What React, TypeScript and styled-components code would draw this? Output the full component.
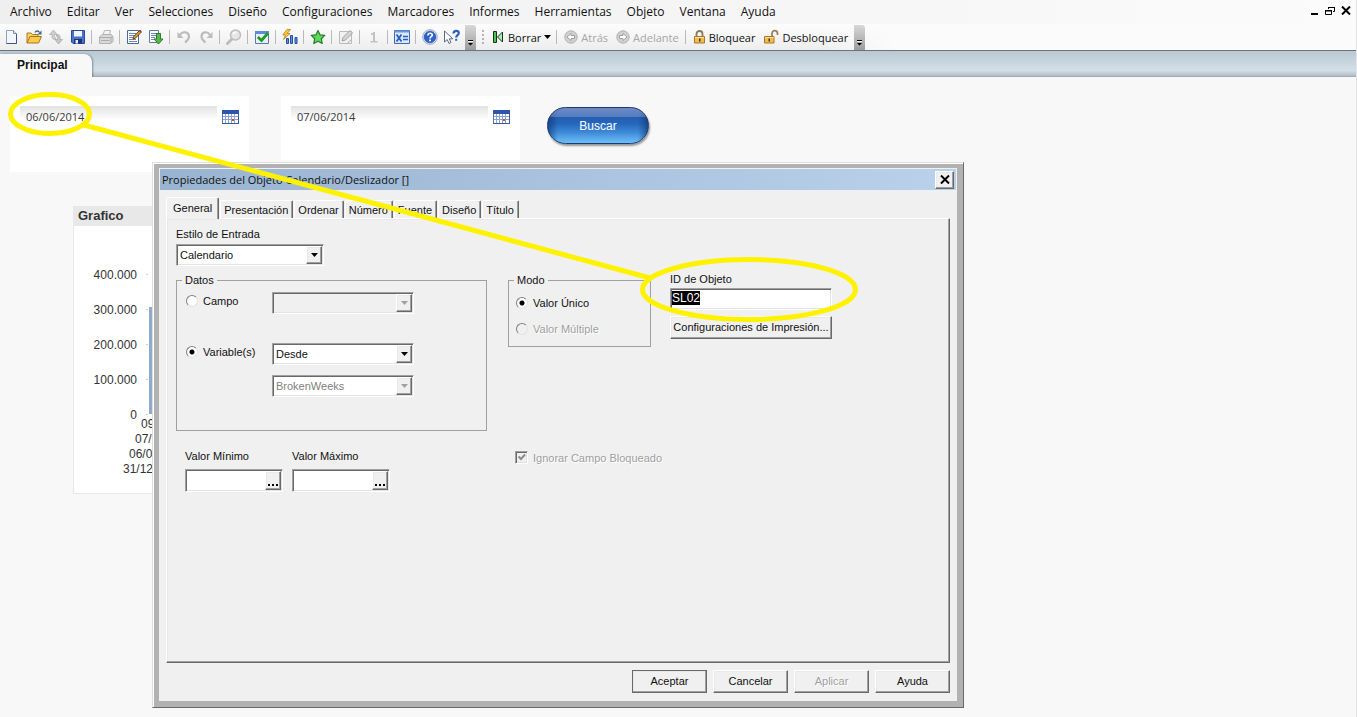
import React, { useEffect, useRef } from "react";
import styled, { createGlobalStyle, css } from "styled-components";

const uiFont = `"Open Sans", "Noto Sans", sans-serif`;
const dialogFont = `"Liberation Sans", Arial, sans-serif`;

const GlobalStyle = createGlobalStyle`
  *, *::before, *::after { box-sizing: border-box; }
  body { margin: 0; background: #f8f8f8; font-family: ${dialogFont}; font-size: 11px; color: #111; }
  button, input, select { font: inherit; color: inherit; margin: 0; }
`;

/* ---------- Classic bevels ---------- */

const sunken = css`
  border: 1px solid;
  border-color: #a0a0a0 #fff #fff #a0a0a0;
  box-shadow: inset 1px 1px 0 #696969, inset -1px -1px 0 #e3e3e3;
`;

const raised = css`
  border: 1px solid;
  border-color: #fff #696969 #696969 #fff;
  box-shadow: inset -1px -1px 0 #a0a0a0, inset 1px 1px 0 #e9e9e9;
`;

/* ---------- Application frame ---------- */

const AppFrame = styled.div`
  display: flex;
  flex-direction: column;
  min-height: 100vh;
  position: relative;
  overflow: hidden;
  border-right: 1px solid #e4e4e4;
`;

const MenuBar = styled.nav`
  display: flex;
  align-items: center;
  height: 24px;
  padding: 0 5px 0 10px;
  background: linear-gradient(90deg, #efefef, #fbfbfb);
  font-family: ${uiFont};
  font-size: 12px;
`;

const MenuList = styled.div`
  display: flex;
  flex: 1;
  gap: 15px;
`;

const MenuItem = styled.button`
  padding: 0;
  border: 0;
  background: none;
  line-height: 16px;
`;

const WindowControls = styled.div`
  display: flex;
  gap: 6px;
  padding-bottom: 3px;
`;

const WindowControl = styled.button`
  display: flex;
  padding: 0;
  border: 0;
  background: none;
`;

const ToolBar = styled.div`
  display: flex;
  align-items: stretch;
  height: 27px;
  padding-left: 1px;
  background: linear-gradient(90deg, rgba(251, 251, 251, 0) 60%, #fbfbfb 66%), linear-gradient(#fdfdfd, #ededed);
  border-bottom: 1px solid #6d7479;
  font-family: ${uiFont};
  font-size: 11px;
`;

const ToolButton = styled.button`
  display: flex;
  align-items: center;
  justify-content: center;
  width: 22px;
  padding: 0;
  border: 0;
  background: none;
`;

const TextToolButton = styled.button<{ $compact?: boolean }>`
  display: flex;
  align-items: center;
  gap: 3px;
  padding: 0 ${(p) => (p.$compact ? 3 : 4)}px;
  border: 0;
  background: none;
  &:disabled { color: #a7a7a7; }
`;

const Separator = styled.span`
  width: 1px;
  height: 14px;
  margin: 0 3px 0 2px;
  align-self: center;
  background: #b9b9b9;
`;

const Overflow = styled.button`
  display: flex;
  align-items: flex-end;
  justify-content: center;
  width: 11px;
  margin: 1px 2px 0;
  padding: 0 0 4px;
  border: 0;
  border-radius: 0 3px 0 0;
  background: linear-gradient(#d8d8d8, #9c9c9c);
`;

const Grip = styled.span`
  width: 2px;
  height: 14px;
  margin: 0 5px 0 4px;
  align-self: center;
  background: repeating-linear-gradient(#b4b4b4 0 2px, transparent 2px 4px);
`;

const TabStrip = styled.div`
  display: flex;
  align-items: flex-end;
  height: 26px;
  background: linear-gradient(#b9c8d2, #d3dfe8 75%, #b5bfc7 94%, #9da3a8);
`;

const SheetTab = styled.button`
  height: 23px;
  padding: 0 24px 1px 17px;
  border: 0;
  border-radius: 0 8px 0 0;
  background: #f8f8f8;
  box-shadow: 1px 0 2px rgba(0, 0, 0, 0.35);
  font-size: 12px;
  font-weight: 700;
`;

const Sheet = styled.main`
  position: relative;
  flex: 1;
  padding: 19px 10px;
  background: #f8f8f8;
`;

const FilterRow = styled.div`
  display: flex;
  align-items: flex-start;
  gap: 27px;
`;

const DateGroup = styled.div`
  display: flex;
  align-items: flex-start;
  gap: 32px;
`;

const DateBox = styled.div<{ $height: number }>`
  display: flex;
  align-items: flex-start;
  gap: 5px;
  width: 239px;
  height: ${(p) => p.$height}px;
  padding: 10px;
  background: #fff;
`;

const DateInput = styled.input`
  flex: 1;
  min-width: 0;
  height: 20px;
  padding: 0 6px;
  border: 0;
  background: linear-gradient(#e2e2e2, #fff 14px);
  font-family: ${uiFont};
  font-size: 11px;
  color: #3a3a3a;
`;

const CalendarButton = styled.button`
  display: flex;
  padding: 4px 0 0;
  border: 0;
  background: none;
`;

const SearchButton = styled.button`
  width: 102px;
  height: 37px;
  margin-top: 11px;
  border: 1px solid #1c3a70;
  border-radius: 19px;
  background:
    linear-gradient(rgba(255, 255, 255, 0.32), rgba(255, 255, 255, 0.2)) top / 100% 9px no-repeat,
    linear-gradient(90deg, rgba(12, 50, 110, 0.6), transparent 10%, transparent 90%, rgba(12, 50, 110, 0.6)),
    linear-gradient(#2a52a8, #2566bb 45%, #3f8ad8 70%, #6cc0f8);
  box-shadow: 1px 2px 2px rgba(0, 0, 0, 0.4);
  color: #fff;
  font-size: 12px;
`;

const ChartPanel = styled.section`
  width: 480px;
  margin: 34px 0 0 63px;
  border: 1px solid #e8e8e8;
  background: #fff;
`;

const ChartTitle = styled.h2`
  margin: 0;
  height: 19px;
  padding: 0 4px;
  background: #e8e8e8;
  font-size: 13px;
  line-height: 18px;
  color: #333;
`;

const ChartSvg = styled.svg`
  display: block;
  width: 100%;
  height: 267px;
  font-size: 12px;
  fill: #333;
`;

/* ---------- Dialog ---------- */

const Dialog = styled.section`
  position: absolute;
  top: 85px;
  left: 152px;
  width: 812px;
  border: 1px solid;
  border-color: #dedede #696969 #696969 #dedede;
  background: #b2b2b2;
  box-shadow: inset 1px 1px 0 #fff;
  padding: 5px 6px 6px;
`;

const DialogBody = styled.div`
  border: 1px solid #f0f0f0;
  background: #f0f0f0;
`;

const TitleBar = styled.header`
  display: flex;
  align-items: center;
  justify-content: space-between;
  height: 21px;
  padding: 0 2px;
  background: linear-gradient(90deg, #99b4d1, #b9d1ea);
  font-family: ${uiFont};
`;

const DialogTitle = styled.h1`
  margin: 0;
  font-size: 11px;
  font-weight: 400;
`;

const CloseButton = styled.button`
  display: flex;
  align-items: center;
  justify-content: center;
  width: 19px;
  height: 18px;
  padding: 0;
  background: #f0f0f0;
  ${raised}
`;

const Tabs = styled.div`
  display: flex;
  align-items: flex-end;
  padding: 7px 0 0 6px;
`;

const Tab = styled.button<{ $active?: boolean }>`
  height: ${(p) => (p.$active ? 22 : 18)}px;
  margin-bottom: ${(p) => (p.$active ? -1 : 0)}px;
  margin-right: 1px;
  padding: ${(p) => (p.$active ? "0 6px 2px" : "0 4px 0 3px")};
  border: solid;
  border-width: 1px 1px 0 1px;
  border-color: #fff #696969 #fff #fff;
  border-radius: 2px 2px 0 0;
  background: #f0f0f0;
  box-shadow: inset -1px 0 0 #a0a0a0;
  position: relative;
  z-index: ${(p) => (p.$active ? 1 : 0)};
`;

const TabPanel = styled.div`
  height: 445px;
  margin: 0 6px;
  padding: 8px 9px;
  ${raised}
`;

const FieldLabel = styled.label`
  display: block;
  height: 17px;
  line-height: 14px;
`;

const SelectFrame = styled.span<{ $width: number; $grey?: boolean }>`
  display: flex;
  width: ${(p) => p.$width}px;
  height: 22px;
  padding: 1px;
  background: ${(p) => (p.$grey ? "#f0f0f0" : "#fff")};
  ${sunken}
`;

const NativeSelect = styled.select`
  flex: 1;
  min-width: 0;
  padding: 0 2px;
  border: 0;
  appearance: none;
  background: none;
  &:disabled { color: #808080; opacity: 1; }
`;

const ArrowBox = styled.span`
  display: flex;
  align-items: center;
  justify-content: center;
  width: 16px;
  background: #f0f0f0;
  ${raised}
`;

const GroupRow = styled.div`
  display: flex;
  align-items: flex-start;
  margin-top: 7px;
`;

const Group = styled.fieldset<{ $width: number; $height: number }>`
  width: ${(p) => p.$width}px;
  height: ${(p) => p.$height}px;
  min-width: 0;
  margin: 0;
  padding: 5px 9px 0;
  border: 1px solid #a0a0a0;
`;

const Legend = styled.legend`
  margin-left: -4px;
  padding: 0 3px;
  line-height: 14px;
`;

const DataGrid = styled.div`
  display: grid;
  grid-template-columns: 86px 142px;
  grid-template-rows: 41px 22px 22px;
  row-gap: 10px;
`;

const Choice = styled.label<{ $disabled?: boolean }>`
  display: flex;
  align-items: center;
  align-self: start;
  gap: 5px;
  height: 17px;
  color: ${(p) => (p.$disabled ? "#a0a0a0" : "#111")};
  text-shadow: ${(p) => (p.$disabled ? "1px 1px 0 #fff" : "none")};
`;

const ModeList = styled.div`
  display: grid;
  gap: 9px;
  margin-left: -2px;
  padding-top: 2px;
`;

const Radio = styled.input`
  appearance: none;
  width: 12px;
  height: 12px;
  border: 1px solid;
  border-color: #808080 #e3e3e3 #e3e3e3 #808080;
  border-radius: 50%;
  background: ${(p) => (p.disabled ? "#f0f0f0" : "#fff")};
  &:checked { background: radial-gradient(circle, #000 0 2px, #fff 3px); }
`;

const CheckFrame = styled.span`
  display: grid;
  width: 13px;
  height: 13px;
  background: #f0f0f0;
  ${sunken}
  & > * { grid-area: 1 / 1; }
`;

const CheckInput = styled.input`
  appearance: none;
  width: 11px;
  height: 11px;
`;

const ModeCell = styled.div`
  margin-left: 21px;
`;

const ObjectColumn = styled.div`
  display: flex;
  flex-direction: column;
  width: 162px;
  margin-left: 19px;
`;

const IdLabel = styled.label`
  padding-bottom: 2px;
  line-height: 13px;
`;

const IdInput = styled.input`
  height: 22px;
  padding: 0 1px 2px;
  background: #fff;
  font-size: 12px;
  outline: none;
  ${sunken}
  &::selection { background: #000; color: #fff; }
`;

const PushButton = styled.button<{ $default?: boolean }>`
  min-width: 75px;
  height: 23px;
  padding: 0 0 2px;
  background: #f0f0f0;
  white-space: nowrap;
  ${raised}
  outline: ${(p) => (p.$default ? "1px solid #696969" : "none")};
  outline-offset: -1px;
  &:disabled { color: #a0a0a0; text-shadow: 1px 1px 0 #fff; }
`;

const PrintButton = styled(PushButton)`
  margin-top: 6px;
`;

const LimitRow = styled.div`
  display: flex;
  margin-top: 18px;
  padding-left: 9px;
`;

const LimitFields = styled.div`
  display: flex;
  gap: 9px;
  width: 330px;
`;

const LimitLabel = styled.label`
  display: block;
  height: 20px;
  line-height: 14px;
`;

const LimitFrame = styled.span`
  display: flex;
  width: 98px;
  height: 23px;
  padding: 1px;
  background: #fff;
  ${sunken}
`;

const LimitInput = styled.input`
  flex: 1;
  min-width: 0;
  padding: 0 2px;
  border: 0;
  background: none;
`;

const MoreButton = styled.button`
  display: flex;
  align-items: flex-end;
  justify-content: center;
  width: 16px;
  padding: 0 0 3px;
  background: #f0f0f0;
  ${raised}
`;

const Footer = styled.footer`
  display: flex;
  justify-content: flex-end;
  gap: 6px;
  padding: 7px 6px;
`;

const Markup = styled.svg`
  position: absolute;
  top: 0;
  left: 0;
  pointer-events: none;
`;

/* ---------- Icons ---------- */

const Icon = ({ children }: { children: React.ReactNode }) => (
  <svg width="16" height="16" viewBox="0 0 16 16" aria-hidden="true">{children}</svg>
);

const NewIcon = () => (
  <Icon>
    <path d="M2.500 1.500h7l3 3v10h-10z" fill="#f3f7fd" stroke="#8fa1c2" />
    <path d="M9.500 1.500v3h3" fill="#cfdcf0" stroke="#7d90b3" />
    <path d="M12.500 5v9.500h-10" fill="none" stroke="#3d557f" />
  </Icon>
);

const OpenIcon = () => (
  <Icon>
    <path d="M1 14V4h4l1.500 1.500H12V8" fill="#f6d26b" stroke="#a97d1f" />
    <path d="M1 14L4 7.500h11.500L12.500 14z" fill="#ffc94a" stroke="#a9741a" />
    <path d="M9 3.500c1-2 3.500-2 4.500 0" fill="none" stroke="#3c6794" strokeWidth="1.300" />
    <path d="M15.500 1.500v4h-4z" fill="#3c6794" />
  </Icon>
);

const ReloadIcon = () => (
  <Icon>
    <path d="M5.500 1L1.500 5.500H4V8c0 1.500 1 2.500 3.500 2.500V8.800C6.500 8.800 6.500 8 6.500 7.500v-2H9z" fill="#cdcdcd" stroke="#b2b2b2" strokeWidth=".8" />
    <path d="M10.500 15l4-4.500H12V8c0-1.500-1-2.500-3.500-2.500v1.700c1 0 1 .8 1 1.300v2H7z" fill="#c6c6c6" stroke="#ababab" strokeWidth=".8" />
  </Icon>
);

const SaveIcon = () => (
  <Icon>
    <path d="M1.500 1.500h13v13H3l-1.500-1.500z" fill="#4a72cc" stroke="#2b479c" />
    <path d="M4 2h8v5.500H4z" fill="#eef3fc" />
    <path d="M4 10h8v4.500H4z" fill="#1e3476" />
    <path d="M5.500 11h2.500v3.500H5.500z" fill="#e6ecf7" />
  </Icon>
);

const PrintIcon = () => (
  <Icon>
    <path d="M5 6l1.500-4.500h6L11.500 6" fill="#f4f4f4" stroke="#b8b8b8" />
    <path d="M1.500 8l2.500-2.500h9.500L15 8v4.500l-2 2H1.500z" fill="#d9d9d9" stroke="#b2b2b2" />
    <path d="M1.500 8.500H13l2-1M3 11.500h8.500M13 8.500v5.500" fill="none" stroke="#acacac" />
  </Icon>
);

const EditScriptIcon = () => (
  <Icon>
    <path d="M1.500 1.500h11v13h-11z" fill="#fff" stroke="#4e6796" />
    <path d="M3 4.500h7M3 6.500h6M3 8.500h4M3 10.500h7M3 12.500h8" stroke="#6d87b4" />
    <path d="M7 10l.7-2.500L13.500 1.500l1.800 1.600L9.500 9.200z" fill="#d99a3c" stroke="#5e3f16" strokeWidth=".9" />
    <path d="M13 2l1.200-1.300 1.600 1.500-1.200 1.300z" fill="#a5302a" />
  </Icon>
);

const RunScriptIcon = () => (
  <Icon>
    <path d="M1.500 1.500h9v12h-9z" fill="#fff" stroke="#6079a6" />
    <path d="M3 4.500h6M3 6.500h5M3 8.500h4M3 10.500h4" stroke="#6d87b4" />
    <path d="M8.500 4.500h4V10H15l-4.500 5L6 10h2.500z" fill="#56b64b" stroke="#2d7d2c" />
  </Icon>
);

const UndoIcon = () => (
  <Icon>
    <path d="M4 6c3-4.500 9-3 9 1.500 0 3-2 4.500-4 6" fill="none" stroke="#bcbcbc" strokeWidth="2.200" />
    <path d="M1.500 3v6h6z" fill="#bcbcbc" />
  </Icon>
);

const RedoIcon = () => (
  <Icon>
    <path d="M12 6C9 1.500 3.500 3 3.500 7.500c0 3 2 4.500 4 6" fill="none" stroke="#bcbcbc" strokeWidth="2.200" />
    <path d="M14.500 3v6h-6z" fill="#bcbcbc" />
  </Icon>
);

const SearchIcon = () => (
  <Icon>
    <path d="M6 10l-4.500 4.500" stroke="#bcbcbc" strokeWidth="3" strokeLinecap="round" />
    <circle cx="9.500" cy="6" r="5" fill="#e6e6e6" stroke="#bdbdbd" strokeWidth="1.500" />
    <path d="M6.800 5.500c.5-1.500 2-2.200 3.500-2" fill="none" stroke="#fff" strokeWidth="1.300" />
  </Icon>
);

const CheckIcon = () => (
  <Icon>
    <path d="M1.500 2.500h13v12h-13z" fill="#e9f0fb" stroke="#5578b6" />
    <path d="M1 2h14v3H1z" fill="#5f8bd8" />
    <path d="M3.800 8l3.700 3.500L14 4" fill="none" stroke="#1f9b1f" strokeWidth="2.800" />
  </Icon>
);

const ChartIcon = () => (
  <Icon>
    <path d="M4.500 9.500h2v5h-2zM8.500 6.500h2v8h-2zM13 8.500h2v6h-2z" fill="#5b92e6" stroke="#274f9c" />
    <path d="M5 .5L.8 6h2.700L1.500 10.500 8 4.500H5L8.500.5z" fill="#ffcb3c" stroke="#b97d16" strokeWidth=".8" />
  </Icon>
);

const StarIcon = () => (
  <Icon>
    <path d="M8 1.500l2 4.300 4.800.6-3.500 3.300.9 4.800L8 12.200l-4.200 2.300.9-4.800L1.200 6.400 6 5.800z" fill="#5fd75a" stroke="#247d2c" strokeWidth="1.200" strokeLinejoin="round" />
  </Icon>
);

const NoteIcon = () => (
  <Icon>
    <path d="M1.500 2.500h12v12h-12z" fill="#f1f1f1" stroke="#bababa" />
    <path d="M4 12l1-3.500 7-7 2.500 2.500-7 7z" fill="#d5d5d5" stroke="#a2a2a2" />
    <path d="M9 14.500l4.500-4" stroke="#b2b2b2" />
  </Icon>
);

const OneIcon = () => (
  <Icon>
    <path d="M5 4.500L8 3h1v9h2.500v1.500H4.500V12H7V5.500L5 6.200z" fill="#c2c2c2" />
  </Icon>
);

const ExpressionIcon = () => (
  <Icon>
    <path d="M.5 1.500h15v13H.5z" fill="#dbe8fb" stroke="#3d69b5" />
    <path d="M.5 1.500h15v2H.5z" fill="#6c97de" />
    <path d="M2.500 5.500l5 7M7.500 5.500l-5 7" stroke="#2b5cba" strokeWidth="1.800" />
    <path d="M9 7.500h5M9 10.500h5" stroke="#2b5cba" strokeWidth="1.600" />
  </Icon>
);

const HelpIcon = () => (
  <Icon>
    <circle cx="8" cy="8" r="7.300" fill="#dfe6f2" stroke="#9aa9c4" />
    <circle cx="8" cy="8" r="5.800" fill="#2f62c8" stroke="#1e459b" strokeWidth=".6" />
    <path d="M5.800 6.500C6 3.500 10.500 3.700 10.300 6.300 10.200 7.700 8 7.800 8 9.500" fill="none" stroke="#fff" strokeWidth="1.600" />
    <path d="M7.100 10.600h1.800v1.700H7.100z" fill="#fff" />
  </Icon>
);

const ContextHelpIcon = () => (
  <Icon>
    <path d="M.5 2v11l2.700-2.500L5 14.500l2-1-1.700-3.700h3.500z" fill="#fff" stroke="#5c6a86" />
    <path d="M9.500 4.500C9.700.8 15 1 14.800 4.300c-.1 1.900-2.600 2-2.600 4.200" fill="none" stroke="#2f5fb8" strokeWidth="2.200" />
    <path d="M11.200 9.800h2v2h-2z" fill="#2f5fb8" />
  </Icon>
);

const ClearIcon = () => (
  <svg width="13" height="16" viewBox="0 0 13 16" aria-hidden="true">
    <path d="M1.500 2.500h3v11h-3z" fill="#4fbf5a" stroke="#12351a" />
    <path d="M10.500 3v10L5.500 8z" fill="#a6efab" stroke="#12351a" />
  </svg>
);

const ArrowCircleIcon = ({ back }: { back?: boolean }) => (
  <svg width="14" height="14" viewBox="0 0 14 14" aria-hidden="true">
    <circle cx="7" cy="7" r="6.200" fill="#d0d0d0" stroke="#b2b2b2" />
    <path
      d={back ? "M3 7l4-3.500v2h3.500v3H7v2z" : "M11 7L7 3.500v2H3.500v3H7v2z"}
      fill="#fff"
      stroke="#9a9a9a"
      strokeWidth=".9"
    />
  </svg>
);

const LockIcon = () => (
  <svg width="13" height="16" viewBox="0 0 13 16" aria-hidden="true">
    <path d="M3.500 7.500V5c0-4 6-4 6 0v2.500" fill="none" stroke="#8a7a55" strokeWidth="1.800" />
    <path d="M1.500 7.500h10v6.500h-10z" fill="#f0bd4c" stroke="#a9772a" />
    <path d="M2 8.500h9" stroke="#ffe39b" />
    <path d="M6 9.500h1.500v3H6z" fill="#4b3512" />
  </svg>
);

const UnlockIcon = () => (
  <svg width="16" height="16" viewBox="0 0 16 16" aria-hidden="true">
    <path d="M9 7.500V4.500c0-4 5.500-3.500 5.500 0V6" fill="none" stroke="#9a8455" strokeWidth="1.800" />
    <path d="M1.500 7.500h9.500v6.500H1.500z" fill="#f0bd4c" stroke="#a9772a" />
    <path d="M2 8.500h8.500" stroke="#ffe39b" />
    <path d="M5.500 9.500h1.500v3H5.500z" fill="#4b3512" />
  </svg>
);

const CaretIcon = ({ color = "#000" }: { color?: string }) => (
  <svg width="7" height="4" viewBox="0 0 7 4" aria-hidden="true"><path d="M0 0h7L3.500 4z" fill={color} /></svg>
);

const OverflowIcon = () => (
  <svg width="7" height="6" viewBox="0 0 7 6" aria-hidden="true">
    <path d="M1 0h5v1H1zM1 3h5L3.500 5.500z" fill="#000" />
    <path d="M1 1h5v1H1z" fill="#fff" />
  </svg>
);

const CalendarIcon = () => (
  <svg width="17" height="14" viewBox="0 0 17 14" aria-hidden="true">
    <path d="M.5.5h16v13H.5z" fill="#fff" stroke="#5a76b4" />
    <path d="M0 0h17v4H0z" fill="#2e55ae" />
    <path d="M1 6.500h15M1 9.500h15M3.500 4v9M6.500 4v9M9.500 4v9M12.500 4v9" stroke="#8ba3d2" />
    <path d="M10 9h2v2h-2z" fill="#e0402c" />
    <path d="M0 13.500h17M16.500 4v10" stroke="#3d5a9c" />
  </svg>
);

const CrossIcon = () => (
  <svg width="10" height="9" viewBox="0 0 10 9" aria-hidden="true">
    <path d="M1 .5l8 8M9 .5l-8 8" stroke="#000" strokeWidth="2" />
  </svg>
);

/* ---------- Pieces ---------- */

const menus = [
  "Archivo", "Editar", "Ver", "Selecciones", "Diseño", "Configuraciones",
  "Marcadores", "Informes", "Herramientas", "Objeto", "Ventana", "Ayuda",
];

type Tool = [string, React.ComponentType];

const toolGroups: Tool[][] = [
  [["Nuevo", NewIcon], ["Abrir", OpenIcon], ["Recargar", ReloadIcon], ["Guardar", SaveIcon]],
  [["Imprimir", PrintIcon]],
  [["Editar script", EditScriptIcon], ["Ejecutar script", RunScriptIcon]],
  [["Deshacer", UndoIcon], ["Rehacer", RedoIcon]],
  [["Buscar", SearchIcon]],
  [["Selecciones actuales", CheckIcon]],
  [["Gráfico rápido", ChartIcon]],
  [["Añadir marcador", StarIcon]],
  [["Notas", NoteIcon]],
  [["Uno", OneIcon]],
  [["Expresiones", ExpressionIcon]],
  [["Ayuda", HelpIcon], ["Ayuda contextual", ContextHelpIcon]],
];

const tabs = ["General", "Presentación", "Ordenar", "Número", "Fuente", "Diseño", "Título"];

type ComboProps = { id: string; label?: string; value: string; width: number; disabled?: boolean; grey?: boolean };

const Combo = ({ id, label, value, width, disabled, grey }: ComboProps) => (
  <SelectFrame $width={width} $grey={grey}>
    <NativeSelect id={id} aria-label={label} disabled={disabled} defaultValue={value}>
      <option value={value}>{value}</option>
    </NativeSelect>
    <ArrowBox><CaretIcon color={disabled ? "#a0a0a0" : "#000"} /></ArrowBox>
  </SelectFrame>
);

const LimitField = ({ id, label }: { id: string; label: string }) => (
  <div>
    <LimitLabel htmlFor={id}>{label}</LimitLabel>
    <LimitFrame>
      <LimitInput id={id} />
      <MoreButton aria-label={`${label}: expresión`}>
        <svg width="11" height="2" viewBox="0 0 11 2" aria-hidden="true">
          <path d="M0 0h2v2H0zM4 0h2v2H4zM8 0h2v2H8z" fill="#000" />
        </svg>
      </MoreButton>
    </LimitFrame>
  </div>
);

const DateField = ({ value, height, label }: { value: string; height: number; label: string }) => (
  <DateBox $height={height}>
    <DateInput aria-label={label} defaultValue={value} />
    <CalendarButton aria-label={`${label}: calendario`}><CalendarIcon /></CalendarButton>
  </DateBox>
);

const SalesChart = () => (
  <ChartPanel>
    <ChartTitle>Grafico</ChartTitle>
    <ChartSvg role="img" aria-label="Grafico">
      {["400.000", "300.000", "200.000", "100.000", "0"].map((t, i) => (
        <g key={t}>
          <text x="63" y={53 + i * 35} textAnchor="end">{t}</text>
          <path d={`M72 ${48.5 + i * 35}h2`} stroke="#d0d0d0" />
        </g>
      ))}
      <path d="M75 81h30v107H75z" fill="#8faaca" />
      <text x="67" y="202">09</text>
      <text x="61" y="217">07/</text>
      <text x="55" y="232">06/0</text>
      <text x="49" y="247">31/12</text>
    </ChartSvg>
  </ChartPanel>
);

const PropertiesDialog = () => {
  const idRef = useRef<HTMLInputElement>(null);
  useEffect(() => {
    idRef.current?.focus();
    idRef.current?.select();
  }, []);

  return (
    <Dialog role="dialog" aria-labelledby="dialog-title">
      <DialogBody>
        <TitleBar>
          <DialogTitle id="dialog-title">Propiedades del Objeto Calendario/Deslizador []</DialogTitle>
          <CloseButton aria-label="Cerrar"><CrossIcon /></CloseButton>
        </TitleBar>
        <Tabs role="tablist">
          {tabs.map((t, i) => (
            <Tab key={t} role="tab" aria-selected={i === 0} $active={i === 0}>{t}</Tab>
          ))}
        </Tabs>
        <TabPanel role="tabpanel">
          <FieldLabel htmlFor="style">Estilo de Entrada</FieldLabel>
          <Combo id="style" value="Calendario" width={148} />
          <GroupRow>
            <Group $width={311} $height={158}>
              <Legend>Datos</Legend>
              <DataGrid>
                <Choice><Radio type="radio" name="source" />Campo</Choice>
                <Combo id="field" label="Campo" value="" width={142} disabled grey />
                <Choice><Radio type="radio" name="source" defaultChecked />Variable(s)</Choice>
                <Combo id="variable" label="Variable" value="Desde" width={142} />
                <span />
                <Combo id="variable2" label="Segunda variable" value="BrokenWeeks" width={142} disabled />
              </DataGrid>
            </Group>
            <ModeCell>
              <Group $width={143} $height={74}>
                <Legend>Modo</Legend>
                <ModeList>
                  <Choice><Radio type="radio" name="mode" defaultChecked />Valor Único</Choice>
                  <Choice $disabled><Radio type="radio" name="mode" disabled />Valor Múltiple</Choice>
                </ModeList>
              </Group>
            </ModeCell>
            <ObjectColumn>
              <IdLabel htmlFor="object-id">ID de Objeto</IdLabel>
              <IdInput id="object-id" ref={idRef} defaultValue="SL02" />
              <PrintButton>Configuraciones de Impresión...</PrintButton>
            </ObjectColumn>
          </GroupRow>
          <LimitRow>
            <LimitFields>
              <LimitField id="min" label="Valor Mínimo" />
              <LimitField id="max" label="Valor Máximo" />
            </LimitFields>
            <Choice $disabled>
              <CheckFrame>
                <CheckInput type="checkbox" defaultChecked disabled />
                <svg width="11" height="11" viewBox="0 0 11 11" aria-hidden="true">
                  <path d="M2.500 4.500L5 7l4-4.500" fill="none" stroke="#8c8c8c" strokeWidth="2" />
                </svg>
              </CheckFrame>
              Ignorar Campo Bloqueado
            </Choice>
          </LimitRow>
        </TabPanel>
        <Footer>
          <PushButton $default>Aceptar</PushButton>
          <PushButton>Cancelar</PushButton>
          <PushButton disabled>Aplicar</PushButton>
          <PushButton>Ayuda</PushButton>
        </Footer>
      </DialogBody>
    </Dialog>
  );
};

const App = () => (
  <>
    <GlobalStyle />
    <AppFrame>
      <MenuBar aria-label="Menú principal">
        <MenuList>{menus.map((m) => <MenuItem key={m}>{m}</MenuItem>)}</MenuList>
        <WindowControls>
          <WindowControl aria-label="Minimizar">
            <svg width="10" height="10" viewBox="0 0 10 10"><path d="M2 7h7v2H2z" /></svg>
          </WindowControl>
          <WindowControl aria-label="Restaurar">
            <svg width="10" height="10" viewBox="0 0 10 10">
              <path d="M3.500 3V1.500h6v4H8M.5 4.500h6v4h-6z" fill="none" stroke="#000" />
              <path d="M3 1h7v1H3zM0 4h7v1.500H0z" />
            </svg>
          </WindowControl>
          <WindowControl aria-label="Cerrar documento"><CrossIcon /></WindowControl>
        </WindowControls>
      </MenuBar>
      <ToolBar role="toolbar">
        {toolGroups.map((group, i) => (
          <React.Fragment key={i}>
            {i > 0 && <Separator />}
            {group.map(([name, Glyph]) => (
              <ToolButton key={name} aria-label={name}><Glyph /></ToolButton>
            ))}
          </React.Fragment>
        ))}
        <Overflow aria-label="Más botones"><OverflowIcon /></Overflow>
        <Grip />
        <TextToolButton $compact><ClearIcon />Borrar<CaretIcon /></TextToolButton>
        <Separator />
        <TextToolButton disabled><ArrowCircleIcon back />Atrás</TextToolButton>
        <TextToolButton disabled><ArrowCircleIcon />Adelante</TextToolButton>
        <Separator />
        <TextToolButton><LockIcon />Bloquear</TextToolButton>
        <TextToolButton><UnlockIcon />Desbloquear</TextToolButton>
        <Overflow aria-label="Más botones"><OverflowIcon /></Overflow>
      </ToolBar>
      <TabStrip role="tablist">
        <SheetTab role="tab" aria-selected>Principal</SheetTab>
      </TabStrip>
      <Sheet>
        <FilterRow>
          <DateGroup>
            <DateField label="Desde" value="06/06/2014" height={76} />
            <DateField label="Hasta" value="07/06/2014" height={64} />
          </DateGroup>
          <SearchButton>Buscar</SearchButton>
        </FilterRow>
        <SalesChart />
        <PropertiesDialog />
      </Sheet>
      <Markup width="870" height="340" viewBox="0 0 870 340" aria-hidden="true">
        <g fill="none" stroke="#fff200" strokeWidth="5">
          <ellipse cx="50" cy="114" rx="39.500" ry="19.500" />
          <path d="M84 125L650 278" />
          <ellipse cx="749" cy="289.500" rx="106.500" ry="30" />
        </g>
      </Markup>
    </AppFrame>
  </>
);

export default App;
